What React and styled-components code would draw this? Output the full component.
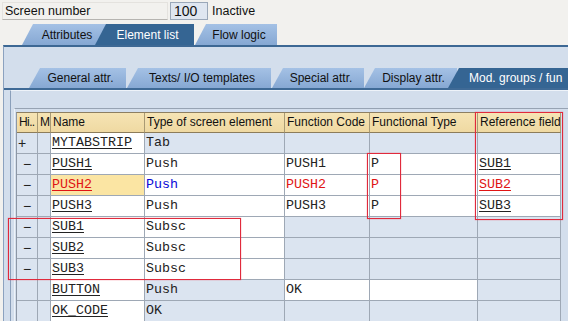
import React from "react";
import styled, { createGlobalStyle } from "styled-components";

const GlobalStyle = createGlobalStyle`
  html, body { margin: 0; padding: 0; }
  body {
    background: #f2f1ee;
    font-family: "Liberation Sans", Arial, sans-serif;
    font-size: 12px;
    color: #111;
    overflow: hidden;
  }
`;

const Page = styled.div`
  width: 568px;
  height: 321px;
  overflow: hidden;
  display: flex;
  flex-direction: column;
`;

const TopBar = styled.div`
  display: flex;
  align-items: center;
  height: 18px;
  padding: 2px;
`;

const FieldLabel = styled.div`
  width: 166px;
  height: 18px;
  box-sizing: border-box;
  border: 1px solid #e4e2de;
  border-bottom-color: #b6b4b0;
  padding-left: 2px;
  line-height: 16px;
  font-size: 12.5px;
`;

const NumberField = styled.div`
  width: 38px;
  height: 18px;
  box-sizing: border-box;
  margin-left: 2px;
  background: #dfe6f0;
  border: 1px solid #9aa7b8;
  padding-left: 3px;
  line-height: 16px;
  font-size: 14px;
`;

const Status = styled.div`
  margin-left: 4px;
  font-size: 12.5px;
`;

const TabStrip = styled.div`
  display: flex;
  align-items: flex-end;
  height: 21px;
  margin-top: 2px;
  padding-left: ${p => p.$indent}px;
`;

const Tab = styled.div`
  position: relative;
  z-index: ${p => (p.$active ? 2 : 1)};
  flex: none;
  width: ${p => p.$w}px;
  height: ${p => p.$h}px;
  margin-left: ${p => p.$ml || 0}px;
  box-sizing: border-box;
  clip-path: polygon(11px 0, 100% 0, 100% 100%, 0 100%);
  background: ${p =>
    p.$active ? "#356593" : "linear-gradient(#a4c1e5, #86a8d3)"};
  color: ${p => (p.$active ? "#fff" : "#111")};
  display: flex;
  align-items: center;
  justify-content: ${p => (p.$left ? "flex-start" : "center")};
  padding-left: ${p => (p.$left ? 21 : 6)}px;
  white-space: nowrap;
  overflow: hidden;
  font-size: 12px;
`;

const MainPanel = styled.div`
  flex: 1;
  margin-left: 3px;
  border-top: 2px solid #3d6894;
  border-left: 1px solid #8ca2bf;
  background: #d3deec;
  display: flex;
  flex-direction: column;
`;

const SubTabStrip = styled(TabStrip)`
  height: 20px;
  margin-top: 21px;
  border-bottom: 2px solid #3f6a96;
`;

const InnerFrame = styled.div`
  flex: 1;
  margin-left: 6px;
  border-left: 1px solid #8a9fba;
  border-top: 1px solid #eef3f9;
`;

const TableFrame = styled.div`
  margin: 17px 0 0 3px;
  border-top: 1px solid #97a3b3;
  border-left: 1px solid #eef3f9;
  padding: 3px 0 0 1px;
`;

const Grid = styled.div`
  position: relative;
  width: 545px;
  display: grid;
  grid-template-columns: 21px 13px 94px 140px 85px 108px 83px;
  border-left: 1px solid #8d97a5;
  border-top: 1px solid #8d7f62;
`;

const HeadCell = styled.div`
  height: 20px;
  box-sizing: border-box;
  background: linear-gradient(#f6e4b4, #efd9a2);
  border-right: 1px solid #a99a74;
  border-bottom: 1px solid #8c7c5a;
  padding-left: 2px;
  line-height: 19px;
  white-space: nowrap;
  overflow: hidden;
  font-size: 12px;
  letter-spacing: ${p => (p.$tight ? "-0.6px" : "0")};
`;

const fills = {
  white: "#ffffff",
  blue: "#dbe4f0",
  yellow: "#fbe5a3",
};

const Cell = styled.div`
  height: 21px;
  box-sizing: border-box;
  background: ${p => fills[p.$fill || "blue"]};
  border-right: 1px solid #9ea8b5;
  border-bottom: 1px solid #9ea8b5;
  padding-left: 1px;
  line-height: 20px;
  white-space: nowrap;
  overflow: hidden;
  font-family: "Liberation Mono", "Courier New", monospace;
  font-size: 13.33px;
  color: ${p => p.$color || "#222"};
  text-decoration: ${p => (p.$u ? "underline" : "none")};
  text-underline-offset: 2px;
`;

const SignCell = styled(Cell)`
  font-family: "Liberation Sans", Arial, sans-serif;
  font-size: 14px;
  text-align: ${p => (p.$plus ? "left" : "center")};
  padding-left: ${p => (p.$plus ? 1 : 0)}px;
`;

const Mark = styled.div`
  position: absolute;
  left: ${p => p.$x}px;
  top: ${p => p.$y}px;
  width: ${p => p.$w}px;
  height: ${p => p.$h}px;
  box-sizing: border-box;
  border: 1px solid #e02a3c;
  box-shadow: 0 0 1px rgba(235, 40, 60, 0.7);
  pointer-events: none;
`;

const RED = "#e01414";
const BLUE = "#0a0ad8";

const headers = [
  "Hi..",
  "M",
  "Name",
  "Type of screen element",
  "Function Code",
  "Functional Type",
  "Reference field",
];

const rows = [
  { sign: "+", name: "MYTABSTRIP", type: "Tab", fills: ["white", "blue", "blue", "blue", "blue"] },
  { sign: "−", name: "PUSH1", type: "Push", code: "PUSH1", ftype: "P", ref: "SUB1", fills: ["white", "white", "white", "white", "white"] },
  { sign: "−", name: "PUSH2", type: "Push", code: "PUSH2", ftype: "P", ref: "SUB2", hot: true, fills: ["yellow", "white", "white", "white", "white"] },
  { sign: "−", name: "PUSH3", type: "Push", code: "PUSH3", ftype: "P", ref: "SUB3", fills: ["white", "white", "white", "white", "white"] },
  { sign: "−", name: "SUB1", type: "Subsc", fills: ["white", "white", "blue", "blue", "blue"] },
  { sign: "−", name: "SUB2", type: "Subsc", fills: ["white", "white", "blue", "blue", "blue"] },
  { sign: "−", name: "SUB3", type: "Subsc", fills: ["white", "white", "blue", "blue", "blue"] },
  { sign: "", name: "BUTTON", type: "Push", code: "OK", fills: ["white", "blue", "white", "white", "blue"] },
  { sign: "", name: "OK_CODE", type: "OK", fills: ["white", "blue", "blue", "blue", "blue"] },
];

export default function App() {
  return (
    <Page>
      <GlobalStyle />
      <TopBar>
        <FieldLabel>Screen number</FieldLabel>
        <NumberField>100</NumberField>
        <Status>Inactive</Status>
      </TopBar>

      <TabStrip $indent={22}>
        <Tab $w={84} $h={21}>Attributes</Tab>
        <Tab $w={99} $h={21} $ml={-11} $active>Element list</Tab>
        <Tab $w={82} $h={21} $ml={1}>Flow logic</Tab>
      </TabStrip>

      <MainPanel>
        <SubTabStrip $indent={25}>
          <Tab $w={97} $h={20}>General attr.</Tab>
          <Tab $w={144} $h={20} $ml={1}>Texts/ I/O templates</Tab>
          <Tab $w={92} $h={20} $ml={1}>Special attr.</Tab>
          <Tab $w={93} $h={20}>Display attr.</Tab>
          <Tab $w={120} $h={20} $ml={-9} $active $left>
            Mod. groups / fun
          </Tab>
        </SubTabStrip>

        <InnerFrame>
          <TableFrame>
            <Grid>
              {headers.map((h, i) => (
                <HeadCell key={h} $tight={i === 0}>{h}</HeadCell>
              ))}
              {rows.map(r => {
                const c = r.hot ? RED : undefined;
                return (
                  <React.Fragment key={r.name}>
                    <SignCell $plus={r.sign === "+"}>{r.sign}</SignCell>
                    <Cell />
                    <Cell $fill={r.fills[0]} $u $color={c}>{r.name}</Cell>
                    <Cell $fill={r.fills[1]} $color={r.hot ? BLUE : undefined}>{r.type}</Cell>
                    <Cell $fill={r.fills[2]} $color={c}>{r.code}</Cell>
                    <Cell $fill={r.fills[3]} $color={c}>{r.ftype}</Cell>
                    <Cell $fill={r.fills[4]} $u $color={c}>{r.ref}</Cell>
                  </React.Fragment>
                );
              })}
              <Mark $x={458} $y={-1} $w={88} $h={108} />
              <Mark $x={350} $y={40} $w={34} $h={66} />
              <Mark $x={-9} $y={105} $w={233} $h={62} />
            </Grid>
          </TableFrame>
        </InnerFrame>
      </MainPanel>
    </Page>
  );
}
